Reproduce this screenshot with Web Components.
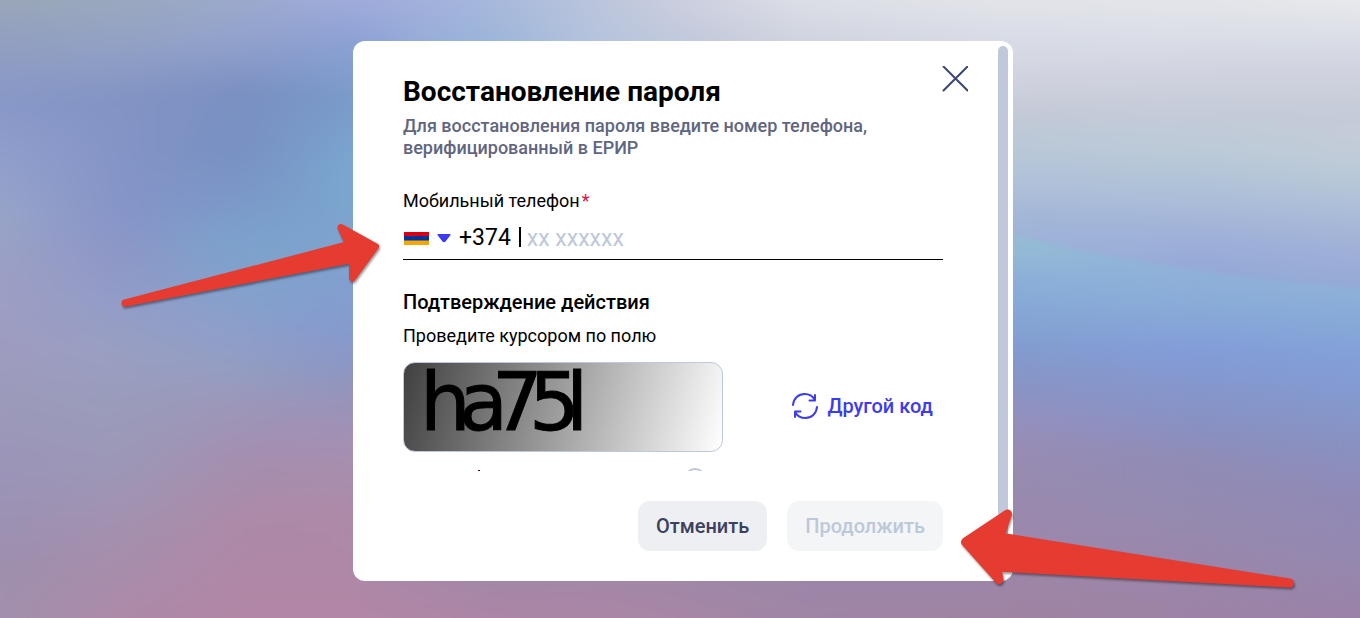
<!DOCTYPE html>
<html lang="ru">
<head>
<meta charset="utf-8">
<meta name="viewport" content="width=device-width, initial-scale=1">
<title>Восстановление пароля</title>
<style>
  html, body { margin: 0; }
  body { font-family: Roboto, "Liberation Sans", sans-serif; color: #000; background: #9aa3c8; overflow-x: hidden; }
</style>
</head>
<body>
<app-backdrop>
  <recovery-dialog>
    <span slot="title">Восстановление пароля</span>
    <span slot="lead">Для восстановления пароля введите номер телефона, верифицированный в ЕРИР</span>
    <phone-field code="+374" placeholder="xx xxxxxx">Мобильный телефон</phone-field>
    <captcha-check code="ha75l">
      <span slot="title">Подтверждение действия</span>
      <span slot="hint">Проведите курсором по полю</span>
      <span slot="refresh">Другой код</span>
    </captcha-check>
    <action-button slot="actions">Отменить</action-button>
    <action-button slot="actions" disabled>Продолжить</action-button>
    <pointer-arrow slot="pointers" kind="field"></pointer-arrow>
    <pointer-arrow slot="pointers" kind="action"></pointer-arrow>
  </recovery-dialog>
</app-backdrop>

<script>
class BaseElement extends HTMLElement {
  constructor() {
    super();
    this.attachShadow({ mode: "open" });
  }
  connectedCallback() {
    this.shadowRoot.innerHTML = this.render();
  }
}

/* Colour mesh: each column is a vertical gradient that fades in over the previous one.
   The columns reach past the edges by BLEED so that blurring leaves no pale rim. */
const W = 1360, H = 618, BLEED = 60;
const BOX = `y="${-BLEED}" height="${H + 2 * BLEED}"`;
const MESH = [
  [0, "0 #9aa7b8,40 #929fc0,105 #8898c8,160 #919fcc,215 #98a4c8,280 #9d9fc4,350 #9e9cc0,400 #9c9abb,480 #9b94b8,560 #9d8fae,618 #a28fae"],
  [120, "0 #9aa8be,40 #93a2c4,100 #8394c4,160 #8494c6,215 #8694c8,260 #8e97c6,300 #929cc8,350 #999fc2,400 #9a9cbc,470 #9d97b6,540 #a58fae,618 #ad8aa8"],
  [240, "0 #9ca9cc,40 #92a2cc,90 #7b90c2,150 #7890c2,200 #7b98c8,240 #7ba2cc,280 #80a2cc,330 #8c9fca,370 #949dc2,410 #9d96b8,455 #a48fb0,520 #ad8aa8,618 #b286a6"],
  [353, "0 #a0acdc,40 #8ca0d4,100 #789aca,160 #7aa6d0,200 #7aa6ce,260 #80a2ce,325 #849ad0,370 #8c96c2,410 #9b92b8,450 #a68fb0,510 #ad8aa8,618 #b286a6"],
  [425, "0 #a3b0dc,41 #98aed8,300 #8aa8d4,581 #a888a8,618 #b086a6"],
  [490, "0 #a6b8dc,41 #9cb6da,300 #90acd4,581 #a287a8,618 #ac86a6"],
  [600, "0 #bcc5dc,41 #b6c4dc,300 #9cb4d8,581 #a487a8,618 #aa86a6"],
  [700, "0 #cfd1e0,41 #c4cadc,300 #9cb4d8,581 #a087a8,618 #a686a6"],
  [800, "0 #dcdfe5,41 #d0d4e0,300 #9cb4d8,581 #9c86a8,618 #a085a6"],
  [1013, "0 #e3e4e9,30 #dadee8,60 #d5d8e3,100 #cacdda,120 #c1c9d6,150 #b9c8d8,190 #aebfd8,215 #a2b6d8,240 #9db4d8,581 #9c86a8,618 #a083a3"],
  [1186, "0 #e4e5ea,40 #d9dde6,75 #d0d3df,110 #c5cbd9,150 #bccad8,170 #b4c6d8,195 #adbfd8,230 #a1b2d8,265 #96aad8"],
  [1360, "0 #e8e9ec,40 #d9dde6,70 #d0d3df,110 #c5cbd8,150 #c2ccd8,180 #b8c8d8,220 #a8bad8,250 #a0b0d8,287 #94a9d6"]
];
const WAVE = [
  [1013, "235 #95bed6,255 #93bad6,280 #8bb0d8,310 #86a8d6,345 #839dd0,380 #8895c6,420 #9490be,450 #988cb4,480 #988bb0,540 #9c88ac,618 #a083a3"],
  [1186, "268 #90b2d8,300 #8aadd8,350 #839dd8,390 #8596cc,430 #8a90c0,460 #908cb6,520 #968aaf,618 #9d83a5"],
  [1360, "287 #8fb1d8,320 #86aad8,360 #839fd8,400 #8499ce,440 #8892c2,500 #9089b6,560 #9588b0,618 #9a82a6"]
];

function meshLayers(id, columns) {
  return columns.map(([x, stops], i) => {
    const from = i ? columns[i - 1][0] : x;
    const left = i ? from : x - BLEED;
    const stopTags = stops.split(",").map(s => {
      const [y, c] = s.split(" ");
      return `<stop offset="${y / H}" stop-color="${c}"/>`;
    }).join("");
    const span = `x="${left}" width="${W + BLEED - left}" ${BOX}`;
    return `<linearGradient id="${id}v${i}" gradientUnits="userSpaceOnUse" x1="0" y1="0" x2="0" y2="${H}">${stopTags}</linearGradient>
      <linearGradient id="${id}h${i}" gradientUnits="userSpaceOnUse" x1="${from}" y1="0" x2="${i ? x : x + 1}" y2="0">
        <stop offset="0" stop-color="#fff" stop-opacity="${i ? 0 : 1}"/><stop offset="1" stop-color="#fff"/></linearGradient>
      <mask id="${id}m${i}" maskUnits="userSpaceOnUse" ${span}><rect ${span} fill="url(#${id}h${i})"/></mask>
      <rect ${span} fill="url(#${id}v${i})" mask="url(#${id}m${i})"/>`;
  }).join("");
}

customElements.define("app-backdrop", class extends BaseElement {
  render() {
    return `
      <style>
        :host { display: flex; justify-content: center; align-items: center; position: relative;
                box-sizing: border-box; min-height: 100vh; padding: 4px 0 0 6px; }
        .mesh { position: absolute; inset: 0; width: 100%; height: 100%; }
      </style>
      <svg class="mesh" viewBox="0 0 ${W} ${H}" preserveAspectRatio="none" aria-hidden="true">
        <defs>
          <filter id="smooth" filterUnits="userSpaceOnUse" x="${-BLEED}" width="${W + 2 * BLEED}" ${BOX} color-interpolation-filters="sRGB">
            <feGaussianBlur stdDeviation="18 6"/></filter>
          <filter id="soft" x="-5%" y="-5%" width="110%" height="110%"><feGaussianBlur stdDeviation="2"/></filter>
          <mask id="wave" maskUnits="userSpaceOnUse" x="0" y="0" width="${W}" height="${H}">
            <path d="M1000 232 Q1186 278 1380 289 V660 H1000 Z" fill="#fff" filter="url(#soft)"/>
          </mask>
        </defs>
        <g filter="url(#smooth)">${meshLayers("a", MESH)}</g>
        <g mask="url(#wave)">${meshLayers("b", WAVE)}</g>
      </svg>
      <slot></slot>`;
  }
});

customElements.define("recovery-dialog", class extends BaseElement {
  render() {
    return `
      <style>
        :host { display: block; position: relative; width: 100%; max-width: 660px; }
        .panel { display: grid; grid-template-columns: 1fr 10px; background: #fff; border-radius: 12px;
                 box-sizing: border-box; padding: 5px 5px 10px 0; }
        .main { padding: 30px 55px 20px 50px; min-width: 0; }
        .rail { background: #bfc9d9; border-radius: 5px; }
        h1 { margin: 0 0 7px; font-size: 28px; line-height: 32px; font-weight: 700; }
        .lead { margin: 0 0 31px; font-size: 18px; line-height: 22px; font-weight: 500; color: #60667f; }
        .actions { display: flex; justify-content: flex-end; gap: 20px; margin-top: 30px; }
        .close { position: absolute; top: 20px; right: 40px; width: 36px; height: 36px; padding: 0;
                 border: 0; background: none; display: grid; place-items: center; cursor: pointer; }
      </style>
      <section class="panel" role="dialog" aria-labelledby="title">
        <div class="main">
          <h1 id="title"><slot name="title"></slot></h1>
          <p class="lead"><slot name="lead"></slot></p>
          <slot></slot>
          <div class="actions"><slot name="actions"></slot></div>
        </div>
        <div class="rail"></div>
      </section>
      <button class="close" type="button" aria-label="Закрыть">
        <svg width="26" height="26" viewBox="0 0 26 26" fill="none" stroke="#3c4771" stroke-width="2" stroke-linecap="round">
          <path d="M1.500 .5 25.500 24.500M25.500 .5 1.500 24.500"/></svg>
      </button>
      <slot name="pointers"></slot>`;
  }
});

customElements.define("phone-field", class extends BaseElement {
  render() {
    return `
      <style>
        :host { display: block; }
        label { display: block; font-size: 18px; line-height: 22px; margin-bottom: 4px; }
        .req { color: #e0113f; margin-left: 2px; }
        .row { display: flex; align-items: center; height: 43px; border-bottom: 1px solid #000; font-size: 23px; }
        .country { display: grid; align-items: center; margin-right: 7px; }
        .country > * { grid-area: 1 / 1; }
        select { width: 100%; height: 100%; opacity: 0; margin: 0; padding: 0; }
        .code { line-height: 26px; }
        .bar { width: 2px; height: 20px; background: #000; margin: 0 6px 2px 8px; }
        input { flex: 1; min-width: 0; border: 0; outline: 0; padding: 2px 0 0; background: none;
                font: inherit; line-height: 26px; }
        input::placeholder { color: #bdc8d9; opacity: 1; }
      </style>
      <label for="phone"><slot></slot><span class="req">*</span></label>
      <div class="row">
        <div class="country">
          <svg width="49" height="16" viewBox="0 0 49 16" aria-hidden="true">
            <path fill="#d90012" d="M1 2h25v4.500H1z"/><path fill="#0033a0" d="M1 6h25v5H1z"/><path fill="#f2a800" d="M1 10.500h25v4.500H1z"/>
            <path fill="#3d3bf0" d="M35.500 4h11q2 0 .7 1.500l-4.700 6q-1.500 1.600-3 0l-4.700-6Q33.500 4 35.500 4z"/>
          </svg>
          <select aria-label="Код страны"><option value="AM"></option></select>
        </div>
        <span class="code">${this.getAttribute("code")}</span>
        <span class="bar"></span>
        <input id="phone" type="tel" placeholder="${this.getAttribute("placeholder")}">
      </div>`;
  }
});

customElements.define("captcha-check", class extends BaseElement {
  render() {
    return `
      <style>
        :host { display: block; margin-top: 30px; }
        h2 { margin: 0 0 11px; font-size: 20px; line-height: 24px; font-weight: 500; }
        .hint { margin: 0 0 15px; font-size: 18px; line-height: 22px; }
        .row { display: flex; justify-content: space-between; align-items: center; flex-wrap: wrap; }
        .field { box-sizing: border-box; width: 320px; height: 90px; border: 1px solid #bdc8dc; border-radius: 12px;
                 background: linear-gradient(105deg, #404040, #fff); }
        .field svg { display: block; overflow: visible; }
        text { font-family: "DejaVu Sans", sans-serif; font-size: 80px; stroke: #000; stroke-width: 1px; }
        button { display: flex; align-items: center; gap: 9px; padding: 10px 10px 12px; border: 0; background: none;
                 font: 500 20px/24px Roboto, "Liberation Sans", sans-serif; color: #3d3bf0; cursor: pointer; }
        .next { display: block; height: 19px; overflow: hidden; }
        .next svg { display: block; }
      </style>
      <h2><slot name="title"></slot></h2>
      <p class="hint"><slot name="hint"></slot></p>
      <div class="row">
        <div class="field">
          <svg width="318" height="88" viewBox="0 0 318 88"><text x="16 55 88 125 162" y="67">${this.getAttribute("code")}</text></svg>
        </div>
        <button type="button">
          <svg width="26" height="26" viewBox="0 0 26 26" fill="none" stroke="#3d3bf0" stroke-width="2" stroke-linecap="round" stroke-linejoin="round" aria-hidden="true">
            <path d="M1 12C1.500 5.500 6.500 1 12.700 1c4.300 0 8 2.200 10.100 5.800M23 2v5.500h-5.500"/>
            <path d="M25 14c-.5 6.500-5.500 11-11.700 11-4.300 0-8-2.200-10.100-5.800M3 24v-5.500h5.500"/></svg>
          <slot name="refresh"></slot>
        </button>
      </div>
      <div class="next" aria-hidden="true">
        <svg width="320" height="40" viewBox="0 0 320 40"><path d="M75 18h2v3h-2z" fill="#402"/>
          <circle cx="292" cy="27" r="10" fill="none" stroke="#bdc8d9" stroke-width="2"/></svg>
      </div>`;
  }
});

customElements.define("action-button", class extends BaseElement {
  render() {
    return `
      <style>
        :host { display: block; }
        button { height: 50px; padding: 0 18px; border: 0; border-radius: 12px; background: #eeeff2; color: #3b4260;
                 font: 500 20px/24px Roboto, "Liberation Sans", sans-serif; cursor: pointer; }
        button:disabled { background: #f4f5f7; color: #bdc8d9; cursor: default; }
      </style>
      <button type="button" ${this.hasAttribute("disabled") ? "disabled" : ""}><slot></slot></button>`;
  }
});

/* Pointers that lie over the dialog and its surroundings. */
const POINTERS = {
  field: { left: -240, top: 170, w: 280, h: 100, stroke: 7,
    d: "M12 92 235.700 33.500 228 16.500 262.500 35.500 239.500 67 239.500 48.500Z" },
  action: { left: 600, top: 460, w: 350, h: 100, stroke: 9,
    d: "M12.500 41 54.500 13 46.500 36 336.500 82 43.500 66 46 78.500Z" }
};

customElements.define("pointer-arrow", class extends BaseElement {
  render() {
    const p = POINTERS[this.getAttribute("kind")];
    return `
      <style>
        :host { position: absolute; left: ${p.left}px; top: ${p.top}px; pointer-events: none; }
        svg { display: block; overflow: visible; filter: drop-shadow(1px 2px 1px rgba(0, 0, 0, .4)); }
      </style>
      <svg width="${p.w}" height="${p.h}" viewBox="0 0 ${p.w} ${p.h}" aria-hidden="true">
        <path d="${p.d}" fill="#e63b30" stroke="#e63b30" stroke-width="${p.stroke}" stroke-linejoin="round"/>
      </svg>`;
  }
});
</script>
</body>
</html>
